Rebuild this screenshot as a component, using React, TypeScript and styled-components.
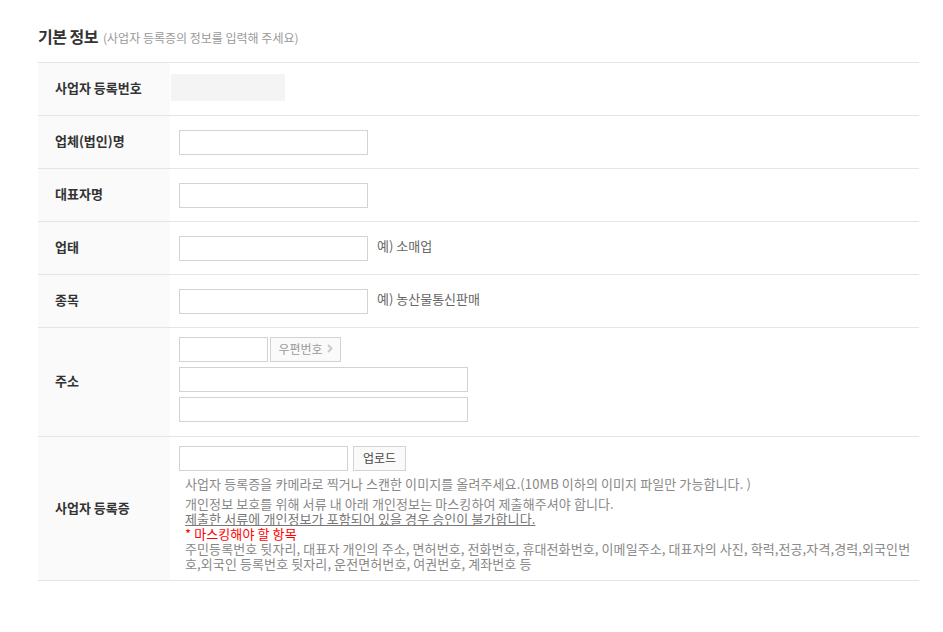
import React from "react";
import styled, { createGlobalStyle } from "styled-components";

const GlobalStyle = createGlobalStyle`
  body {
    margin: 0;
    background: #fff;
    font-family: "Noto Sans CJK KR", "Noto Sans", sans-serif;
    color: #333;
  }
`;

const Page = styled.div`
  padding: 26px 24px 40px 38px;
`;

const TitleBar = styled.div`
  display: flex;
  align-items: baseline;
  height: 20px;
  margin-bottom: 16px;
`;

const Title = styled.h2`
  margin: 0;
  font-size: 16px;
  line-height: 20px;
  font-weight: 700;
  letter-spacing: -0.5px;
  color: #333;
`;

const SubTitle = styled.span`
  margin-left: 5px;
  font-size: 12px;
  color: #999;
`;

const Table = styled.div`
  width: 881px;
  border-top: 1px solid #e5e5e5;
`;

const Row = styled.div`
  display: flex;
  border-bottom: 1px solid #e5e5e5;
`;

const Label = styled.div`
  width: 132px;
  flex-shrink: 0;
  box-sizing: border-box;
  padding: 0 0 3px 17px;
  background: #fafafa;
  display: flex;
  align-items: center;
  font-size: 13px;
  font-weight: 700;
  color: #333;
`;

const Value = styled.div<{ $pad?: string }>`
  flex: 1;
  min-height: 52px;
  box-sizing: border-box;
  padding: ${(p) => p.$pad || "0 9px"};
  display: flex;
  flex-direction: column;
  justify-content: center;
`;

const Line = styled.div<{ $gap?: number }>`
  display: flex;
  align-items: center;
  margin-top: ${(p) => p.$gap || 0}px;
`;

const Masked = styled.div`
  width: 114px;
  height: 27px;
  margin-left: -8px;
  margin-top: -3px;
  background: #f4f4f4;
`;

const Input = styled.input<{ $w: number }>`
  width: ${(p) => p.$w}px;
  height: 25px;
  box-sizing: border-box;
  border: 1px solid #d3d3d3;
  background: #fff;
  padding: 0 6px;
  margin: 0;
  outline: none;
  font-family: inherit;
  font-size: 12px;
`;

const Hint = styled.span`
  margin-left: 9px;
  padding-bottom: 5px;
  font-size: 13px;
  color: #666;
`;

const SmallButton = styled.button<{ $w: number; $ml: number; $dark?: boolean }>`
  width: ${(p) => p.$w}px;
  height: 25px;
  margin-left: ${(p) => p.$ml}px;
  box-sizing: border-box;
  border: 1px solid #d3d3d3;
  background: #fafafa;
  padding: 0 0 2px;
  display: flex;
  align-items: center;
  justify-content: center;
  gap: 4px;
  font-family: inherit;
  font-size: 12px;
  color: ${(p) => (p.$dark ? "#444" : "#999")};
  cursor: pointer;
`;

const Notes = styled.div<{ $gap: number }>`
  margin-top: ${(p) => p.$gap}px;
  padding-left: 6px;
  font-size: 13px;
  line-height: 15px;
  letter-spacing: 0.1px;
  color: #888;
  word-break: break-all;
`;

const Warn = styled.div`
  color: #777;
  text-decoration: underline;
`;

const Red = styled.div`
  color: #f00;
`;

const Chevron = () => (
  <svg width="6" height="9" viewBox="0 0 6 9">
    <polyline points="1,1 4.5,4.5 1,8" fill="none" stroke="#c8c8c8" strokeWidth="2" />
  </svg>
);

const simpleRows = [
  { label: "업체(법인)명" },
  { label: "대표자명" },
  { label: "업태", hint: "예) 소매업" },
  { label: "종목", hint: "예) 농산물통신판매" },
];

export default function App() {
  return (
    <Page>
      <GlobalStyle />
      <TitleBar>
        <Title>기본 정보</Title>
        <SubTitle>(사업자 등록증의 정보를 입력해 주세요)</SubTitle>
      </TitleBar>
      <Table>
        <Row>
          <Label>사업자 등록번호</Label>
          <Value>
            <Line>
              <Masked />
            </Line>
          </Value>
        </Row>
        {simpleRows.map((r) => (
          <Row key={r.label}>
            <Label>{r.label}</Label>
            <Value>
              <Line>
                <Input $w={189} />
                {r.hint && <Hint>{r.hint}</Hint>}
              </Line>
            </Value>
          </Row>
        ))}
        <Row>
          <Label>주소</Label>
          <Value $pad="9px 9px 14px">
            <Line>
              <Input $w={89} />
              <SmallButton $w={71} $ml={2}>
                우편번호 <Chevron />
              </SmallButton>
            </Line>
            <Line $gap={5}>
              <Input $w={289} />
            </Line>
            <Line $gap={5}>
              <Input $w={289} />
            </Line>
          </Value>
        </Row>
        <Row>
          <Label>사업자 등록증</Label>
          <Value $pad="9px 5px 9px 9px">
            <Line>
              <Input $w={169} />
              <SmallButton $w={53} $ml={5} $dark>
                업로드
              </SmallButton>
            </Line>
            <Notes $gap={5}>
              사업자 등록증을 카메라로 찍거나 스캔한 이미지를 올려주세요.(10MB 이하의 이미지 파일만 가능합니다. )
            </Notes>
            <Notes $gap={5}>
              <div>개인정보 보호를 위해 서류 내 아래 개인정보는 마스킹하여 제출해주셔야 합니다.</div>
              <Warn>제출한 서류에 개인정보가 포함되어 있을 경우 승인이 불가합니다.</Warn>
              <Red>* 마스킹해야 할 항목</Red>
              <div>
                주민등록번호 뒷자리, 대표자 개인의 주소, 면허번호, 전화번호, 휴대전화번호, 이메일주소, 대표자의 사진, 학력,전공,자격,경력,외국인번호,외국인 등록번호 뒷자리, 운전면허번호, 여권번호, 계좌번호 등
              </div>
            </Notes>
          </Value>
        </Row>
      </Table>
    </Page>
  );
}
